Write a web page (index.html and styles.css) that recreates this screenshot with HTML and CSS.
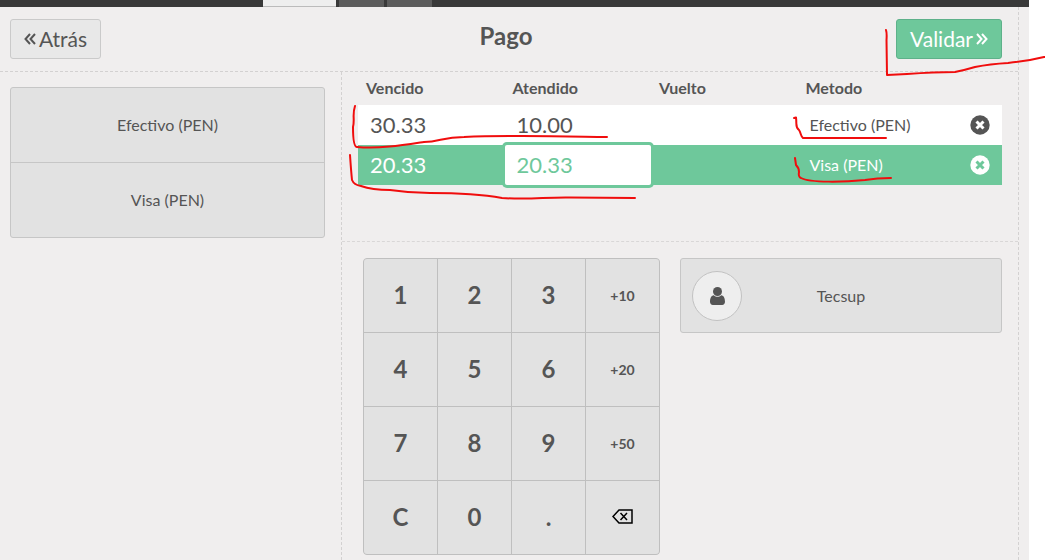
FILE: index.html
```html
<!DOCTYPE html>
<html lang="es">
<head>
<meta charset="utf-8">
<title>Pago</title>
<link rel="stylesheet" href="styles.css">
</head>
<body>
<div class="pos">
  <nav class="topbar">
    <span class="tab tab-active"></span>
    <span class="tab"></span>
    <span class="tab"></span>
  </nav>
  <main class="screen">
    <header class="screen-header">
      <button class="button back" type="button">
        <svg class="chevrons" viewBox="0 0 12 14" aria-hidden="true"><path d="M6 3L1.500 8l4.500 5M11 3L6.500 8l4.500 5"/></svg>
        <span>Atrás</span>
      </button>
      <h1 class="title">Pago</h1>
      <button class="button next" type="button">
        <span>Validar</span>
        <svg class="chevrons" viewBox="0 0 12 14" aria-hidden="true"><path d="M1 3L5.500 8l-4.500 5M6 3L10.500 8l-4.500 5"/></svg>
      </button>
    </header>
    <div class="content">
      <aside class="left">
        <div class="methods">
          <button class="method" type="button">Efectivo (PEN)</button>
          <button class="method" type="button">Visa (PEN)</button>
        </div>
      </aside>
      <div class="right">
        <section class="lines">
          <table class="paymentlines">
            <colgroup><col><col><col><col><col class="col-delete"></colgroup>
            <thead>
              <tr><th>Vencido</th><th>Atendido</th><th>Vuelto</th><th>Metodo</th><th></th></tr>
            </thead>
            <tbody>
              <tr class="line">
                <td>30.33</td><td>10.00</td><td></td><td class="name">Efectivo (PEN)</td>
                <td class="delete"><button class="remove" type="button" aria-label="Eliminar Efectivo"><svg viewBox="0 0 20 20" aria-hidden="true"><circle cx="10" cy="10" r="9.700"/><path d="M6.500 6.500l7 7M13.500 6.500l-7 7"/></svg></button></td>
              </tr>
              <tr class="line selected">
                <td>20.33</td><td class="edit"><input class="amount" type="text" value="20.33" aria-label="Atendido"></td><td></td><td class="name">Visa (PEN)</td>
                <td class="delete"><button class="remove" type="button" aria-label="Eliminar Visa"><svg viewBox="0 0 20 20" aria-hidden="true"><circle cx="10" cy="10" r="9.700"/><path d="M6.500 6.500l7 7M13.500 6.500l-7 7"/></svg></button></td>
              </tr>
            </tbody>
          </table>
        </section>
        <section class="lower">
          <div class="numpad">
            <button class="key" type="button">1</button>
            <button class="key" type="button">2</button>
            <button class="key" type="button">3</button>
            <button class="key mode" type="button">+10</button>
            <button class="key" type="button">4</button>
            <button class="key" type="button">5</button>
            <button class="key" type="button">6</button>
            <button class="key mode" type="button">+20</button>
            <button class="key" type="button">7</button>
            <button class="key" type="button">8</button>
            <button class="key" type="button">9</button>
            <button class="key mode" type="button">+50</button>
            <button class="key" type="button">C</button>
            <button class="key" type="button">0</button>
            <button class="key" type="button">.</button>
            <button class="key" type="button" aria-label="Borrar"><svg class="backspace" viewBox="0 0 21 15" aria-hidden="true"><path d="M7 1H20V14H7L1 7.500Z"/><path d="M8.500 4l6.500 7M15 4l-6.500 7"/></svg></button>
          </div>
          <button class="client" type="button">
            <span class="avatar"><svg viewBox="0 0 15 18" aria-hidden="true"><path d="M3.800 8.200C1 8.500 0 11.500 0 14.800C0 16.800 1.200 18 2.800 18H12.200C13.800 18 15 16.800 15 14.800C15 11.500 14 8.500 11.200 8.200C9 10.300 6 10.300 3.800 8.200Z"/><circle cx="7.500" cy="4.500" r="4.500"/></svg></span>
            <span class="client-name">Tecsup</span>
          </button>
        </section>
      </div>
    </div>
  </main>
</div>
<svg class="marks" width="1045" height="560" viewBox="0 0 1045 560" aria-hidden="true">
  <path d="M886 30Q887 33 886.500 40L887 75L907 74Q935 72 955 72Q965 70 975 67Q990 64 1008 63Q1028 61 1044 57H1046"/>
  <path d="M355 106C352 115 355 119 353 127C353 138 354 147 357 147C380 149 404 145 424 142C440 142 442 137 464 137C510 135 545 136 607 137"/>
  <path d="M350 155Q351 170 352 180Q354 185 361 186Q372 190 390 190Q410 193 430 193C460 193 480 194 502 198C530 200 545 197 570 197.500L635 198"/>
  <path d="M794 118L796 117.500C797 125 795 127 799 130C801 133 801 137 803 138H886"/>
  <path d="M795 158L796 165Q799 168 799 172Q798 177 801 178C810 183 845 182 865 180Q877 178 891 178"/>
</svg>
</body>
</html>
```
FILE: styles.css
```css
* {
  box-sizing: border-box;
}

body {
  margin: 0;
  background: #fff;
  color: #555;
  font-family: Lato, "Liberation Sans", sans-serif;
  font-size: 16px;
}

button,
input {
  margin: 0;
  padding: 0;
  border: 0;
  background: none;
  color: inherit;
  font: inherit;
}

.pos {
  display: flex;
  flex-direction: column;
  min-height: 100vh;
  margin-right: 16px;
  background: #f0eeee;
}

.topbar {
  display: flex;
  gap: 3px;
  height: 7px;
  padding-left: 263px;
  background: #393939;
}

.tab {
  width: 45px;
  background: #5c5c5c;
}

.tab-active {
  width: 73px;
  background: #eee;
  border-bottom: 1px solid #bbb;
}

.screen {
  flex: 1;
  display: flex;
  flex-direction: column;
  margin-right: 10px;
  border-right: 1px dashed #d3d1d1;
}

.screen-header {
  display: grid;
  grid-template-columns: 1fr auto 1fr;
  align-items: center;
  height: 65px;
  padding: 0 16px 0 10px;
  border-bottom: 1px dashed #d3d1d1;
}

.title {
  margin: 0;
  padding-bottom: 6px;
  font-size: 24px;
  line-height: 30px;
}

.button {
  display: flex;
  align-items: center;
  gap: 3px;
  height: 40px;
  padding: 0 13px 2px;
  border: 1px solid #cacaca;
  border-radius: 3px;
  background: #e8e8e8;
  font-size: 21px;
}

.back {
  justify-self: start;
}

.next {
  justify-self: end;
  border-color: #5eb18a;
  background: #6ec89b;
  color: #fff;
}

.chevrons {
  width: 12px;
  height: 14px;
  fill: none;
  stroke: currentColor;
  stroke-width: 2;
}

.content {
  flex: 1;
  display: flex;
}

.left {
  flex: 0 0 341px;
  padding: 15px 16px 0 10px;
}

.methods {
  display: flex;
  flex-direction: column;
  border: 1px solid #c6c6c6;
  border-radius: 3px;
  background: #e2e2e2;
}

.method {
  height: 74px;
  padding-bottom: 1px;
}

.method + .method {
  height: 75px;
  border-top: 1px solid #c6c6c6;
}

.right {
  flex: 1;
  display: flex;
  flex-direction: column;
  border-left: 1px dashed #d3d1d1;
}

.lines {
  min-height: 170px;
  padding: 0 16px;
  border-bottom: 1px dashed #d9d7d7;
}

.paymentlines {
  width: 100%;
  table-layout: fixed;
  border-collapse: collapse;
}

.col-delete {
  width: 58px;
}

.paymentlines th {
  height: 33px;
  padding: 0 8px 2px;
  text-align: left;
}

.line {
  height: 40px;
  background: #fff;
}

.line td {
  padding: 0 0 0 12px;
  font-size: 22px;
  line-height: 30px;
}

.line .name {
  font-size: 16px;
}

.line .delete {
  padding: 0 12px 0 0;
  font-size: 16px;
  line-height: 20px;
}

.selected {
  background: #6ec89b;
  color: #fff;
}

.line .edit {
  padding: 0;
}

.amount {
  display: block;
  width: 100%;
  height: 40px;
  padding: 0 0 2px 12px;
  border-radius: 2px;
  background: #fff;
  box-shadow: 0 0 0 3px #6ec89b;
  color: #6ec89b;
}

.remove {
  display: block;
  width: 20px;
  height: 20px;
  margin-left: auto;
}

.remove svg {
  display: block;
  fill: #555;
  stroke: #fff;
  stroke-width: 3;
}

.remove circle {
  stroke: none;
}

.selected .remove svg {
  fill: #fff;
  stroke: #6ec89b;
}

.lower {
  display: flex;
  align-items: flex-start;
  gap: 20px;
  padding: 16px 16px 5px 21px;
}

.numpad {
  display: grid;
  grid-template-columns: repeat(4, 73px);
  grid-auto-rows: 73px;
  gap: 1px;
  border: 1px solid #bfbfbf;
  border-radius: 4px;
  background: #bfbfbf;
  overflow: hidden;
}

.key {
  padding-bottom: 2px;
  background: #e2e2e2;
  font-size: 24px;
  font-weight: bold;
}

.mode {
  padding-bottom: 0;
  font-size: 14px;
}

.backspace {
  display: block;
  width: 21px;
  height: 15px;
  margin: 0 auto;
  fill: none;
  stroke: #000;
  stroke-width: 1.5;
}

.client {
  flex: 1;
  display: grid;
  grid-template-columns: 50px 1fr 50px;
  align-items: center;
  height: 75px;
  padding: 0 11px;
  border: 1px solid #c6c6c6;
  border-radius: 3px;
  background: #e2e2e2;
}

.avatar {
  display: grid;
  place-items: center;
  height: 50px;
  border: 1px solid #c2c2c2;
  border-radius: 50%;
  background: #eee;
}

.avatar svg {
  width: 15px;
  height: 18px;
  fill: #555;
}

.marks {
  position: absolute;
  top: 0;
  left: 0;
  fill: none;
  stroke: #f00d0d;
  stroke-width: 2;
  stroke-linecap: round;
  stroke-linejoin: round;
  pointer-events: none;
}
```
